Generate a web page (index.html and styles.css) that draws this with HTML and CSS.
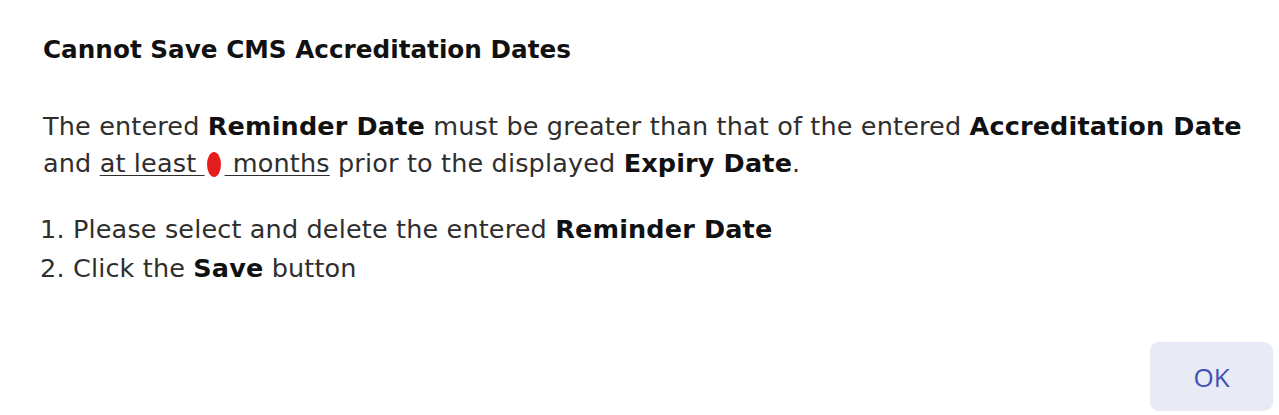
FILE: index.html
```html
<!DOCTYPE html>
<html lang="en">
<head>
<meta charset="utf-8">
<title>Cannot Save CMS Accreditation Dates</title>
<link rel="stylesheet" href="styles.css">
</head>
<body>
<div class="dialog">
  <div class="content">
    <h2 class="title">Cannot Save CMS Accreditation Dates</h2>
    <p class="message">The entered <b>Reminder Date</b> must be greater than that of the entered <b>Accreditation Date</b><br>and <span class="u">at least <span class="redact"></span> months</span> prior to the displayed <b>Expiry Date</b>.</p>
    <ol class="steps">
      <li>Please select and delete the entered <b>Reminder Date</b></li>
      <li>Click the <b>Save</b> button</li>
    </ol>
  </div>
  <div class="actions">
    <button class="ok" type="button">OK</button>
  </div>
</div>
</body>
</html>
```
FILE: styles.css
```css
html, body {
  margin: 0;
  padding: 0;
  background: #ffffff;
}
body {
  font-family: "DejaVu Sans", "Liberation Sans", sans-serif;
  color: #2e2e2e;
}
.dialog {
  width: 1279px;
  height: 415px;
  box-sizing: border-box;
  display: flex;
  flex-direction: column;
  justify-content: space-between;
  padding: 33px 6px 4px 43px;
}
.content {
  display: flex;
  flex-direction: column;
}
.title {
  margin: 0;
  font-size: 24.7px;
  line-height: 34px;
  font-weight: 700;
  color: #111;
}
.message {
  margin: 41px 0 0 0;
  font-size: 25.5px;
  letter-spacing: 0.15px;
  line-height: 37px;
}
.message b, .steps b {
  color: #111;
  font-weight: 700;
}
.u {
  text-decoration: underline;
  text-underline-offset: 3px;
  text-decoration-thickness: 1px;
}
.redact {
  display: inline-block;
  width: 14px;
  height: 25px;
  border-radius: 50%;
  background: #e51d1d;
  vertical-align: -5px;
  margin: 0 4px 0 2px;
}
.steps {
  margin: 28px 0 0 0;
  padding-left: 30px;
  font-size: 25.5px;
  letter-spacing: 0.15px;
  line-height: 39px;
}
.actions {
  display: flex;
  justify-content: flex-end;
}
.ok {
  width: 123px;
  height: 69px;
  border: none;
  border-radius: 9px;
  background: #e8eaf6;
  color: #3f51b5;
  font-family: "Open Sans", "Liberation Sans", sans-serif;
  font-size: 26px;
  font-weight: 400;
  cursor: pointer;
}
```
